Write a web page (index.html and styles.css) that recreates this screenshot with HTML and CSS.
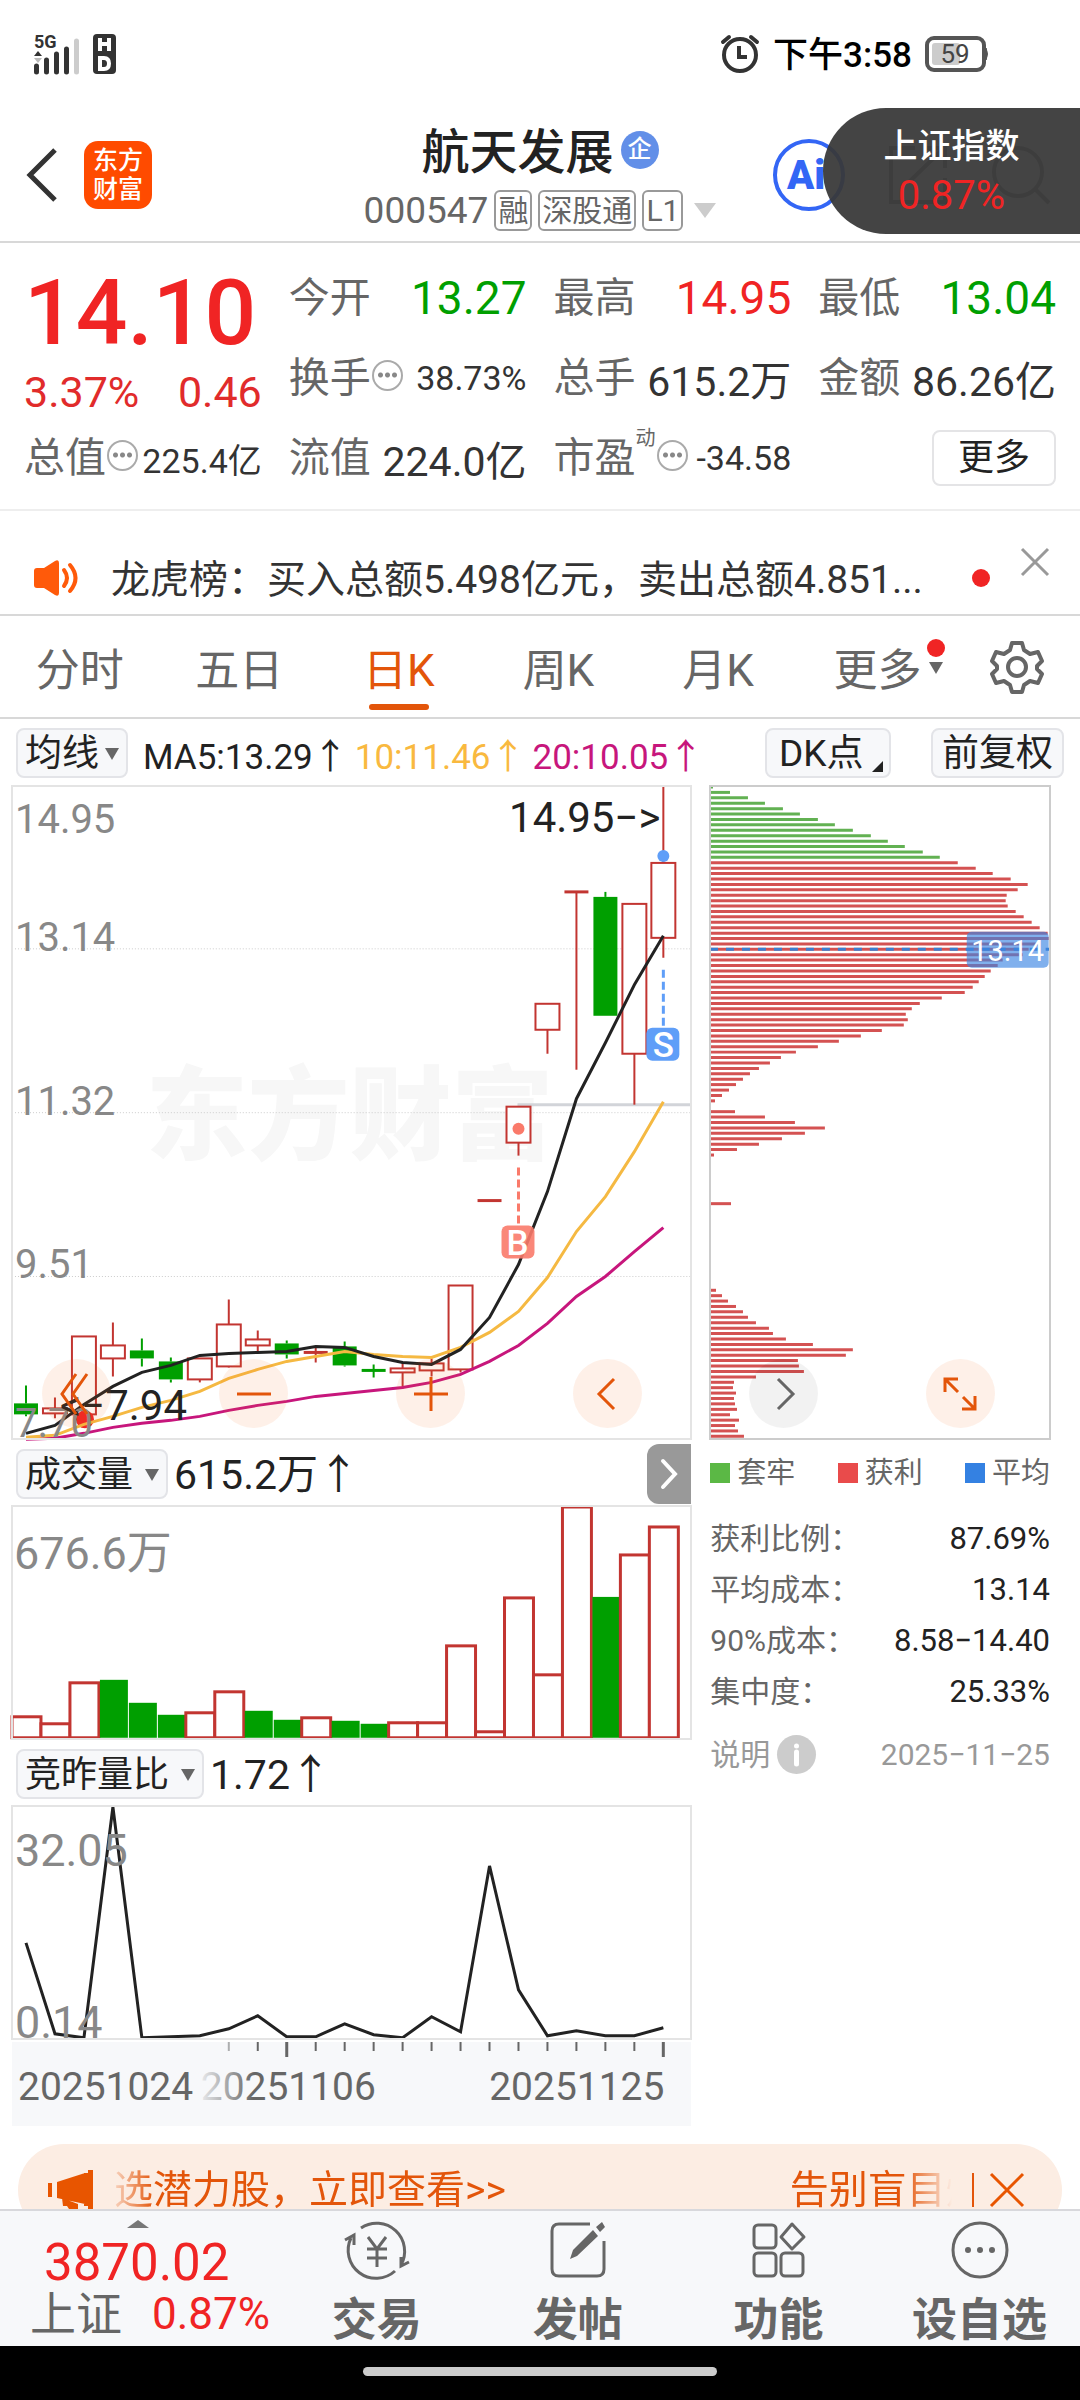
FILE: index.html
```html
<!DOCTYPE html>
<html lang="zh-CN">

<head>
    <meta charset="UTF-8">
    <meta name="viewport" content="width=device-width, initial-scale=1.0">
    <title>航天发展 000547</title>
    <link rel="stylesheet" href="styles.css">
</head>

<body>
    <div class="status-bar">
        <div class="status-side">
            <svg width="46" height="40" viewBox="0 0 46 40">
                <text x="0" y="14" class="net-text">5G</text>
                <path d="M4 17l4 5H0z" fill="#333" />
                <path d="M4 29l4-5H0z" fill="#bbb" />
                <path d="M2.500 32v6M12.500 26v12M22.500 20v18M32.500 15v23" stroke="#333" stroke-width="5" stroke-linecap="round" />
                <path d="M42.500 7v31" stroke="#ccc" stroke-width="5" stroke-linecap="round" />
            </svg>
            <svg width="23" height="40" viewBox="0 0 23 40">
                <rect width="23" height="40" rx="4" fill="#333" />
                <path d="M7 4v13M16 4v13M7 10h9M7 24v11h4q5 0 5-5.500t-5-5.500z" fill="none" stroke="#fff" stroke-width="4" />
            </svg>
        </div>
        <div class="status-side">
            <svg width="40" height="40" viewBox="0 0 40 40" fill="none" stroke="#333" stroke-width="4">
                <circle cx="20" cy="21" r="16" />
                <path d="M3 8l6-5M37 8l-6-5" stroke-linecap="round" />
                <path d="M19 12v11h8" />
            </svg>
            <span class="clock">下午3:58</span>
            <svg width="64" height="36" viewBox="0 0 64 36">
                <rect x="2" y="2" width="57" height="32" rx="7" fill="#fff" stroke="#555" stroke-width="4" />
                <rect x="7" y="7" width="28" height="22" rx="3" fill="#ccc" />
                <path d="M61 12q3 6 0 12z" fill="#555" stroke="#555" />
                <text x="30" y="27" text-anchor="middle" class="battery-text">59</text>
            </svg>
        </div>
    </div>

    <header class="header">
        <div class="header-left">
            <button class="icon-btn" aria-label="返回">
                <svg width="34" height="56" viewBox="0 0 34 56"><path d="M31 3L6 28l25 25" fill="none" stroke="#333" stroke-width="5" /></svg>
            </button>
            <div class="logo"><span>东方</span><span>财富</span></div>
        </div>
        <div class="stock">
            <div class="stock-name"><h1>航天发展</h1><span class="corp">企</span></div>
            <div class="stock-code">
                <span>000547</span>
                <span class="tag">融</span>
                <span class="tag">深股通</span>
                <span class="tag">L1</span>
                <svg class="code-arrow" width="22" height="15" viewBox="0 0 22 15"><path d="M0 0h22L11 15z" fill="#ccc" /></svg>
            </div>
        </div>
        <div class="header-right">
            <button class="icon-btn" aria-label="AI">
                <svg width="74" height="74" viewBox="0 0 74 74">
                    <circle cx="37" cy="37" r="34" fill="#fff" stroke="#3366f5" stroke-width="4" />
                    <text x="15" y="51" class="ai-text">Ai</text>
                </svg>
            </button>
            <button class="icon-btn" aria-label="分享">
                <svg width="62" height="62" viewBox="0 0 62 62" fill="none" stroke="#888" stroke-width="4"><path d="M28 4H4v54h54V34M22 38L56 5M38 4h20v20" /></svg>
            </button>
            <button class="icon-btn" aria-label="搜索">
                <svg width="62" height="62" viewBox="0 0 62 62" fill="none" stroke="#888" stroke-width="4"><circle cx="28" cy="28" r="24" /><path d="M45 45l14 14" /></svg>
            </button>
        </div>
        <div class="float-index">
            <span>上证指数</span>
            <strong>0.87%</strong>
        </div>
    </header>

    <main class="content">
        <section class="quote">
            <div class="price">
                <div class="price-now">14.10</div>
                <div class="price-change"><span>3.37%</span><span>0.46</span></div>
            </div>
            <div class="cell"><span class="label">今开</span><span class="num green">13.27</span></div>
            <div class="cell"><span class="label">最高</span><span class="num red">14.95</span></div>
            <div class="cell"><span class="label">最低</span><span class="num green">13.04</span></div>
            <div class="cell"><span class="label">换手<i class="dots"></i></span><span class="val small">38.73%</span></div>
            <div class="cell"><span class="label">总手</span><span class="val">615.2万</span></div>
            <div class="cell"><span class="label">金额</span><span class="val">86.26亿</span></div>
            <div class="cell"><span class="label">总值<i class="dots"></i></span><span class="val small">225.4亿</span></div>
            <div class="cell"><span class="label">流值</span><span class="val">224.0亿</span></div>
            <div class="cell"><span class="label">市盈<sup>动</sup><i class="dots"></i></span><span class="val small">-34.58</span></div>
            <div class="cell cell-end"><button class="more-btn">更多</button></div>
        </section>

        <section class="notice">
            <svg width="46" height="36" viewBox="0 0 46 36">
                <path d="M0 11q0-3 3-3h7L21 1q4-2 4 2v30q0 4-4 2L10 28H3q-3 0-3-3z" fill="#ff5a0a" />
                <path d="M30 10q6 8 0 16M36 5q11 13 0 26" fill="none" stroke="#ff5a0a" stroke-width="4" stroke-linecap="round" />
            </svg>
            <p>龙虎榜：买入总额5.498亿元，卖出总额4.851...</p>
            <span class="red-dot"></span>
            <button class="icon-btn notice-close" aria-label="关闭">
                <svg width="28" height="28" viewBox="0 0 28 28"><path d="M1 1l26 26M27 1L1 27" stroke="#999" stroke-width="3" /></svg>
            </button>
        </section>

        <nav class="tabs">
            <button class="tab">分时</button>
            <button class="tab">五日</button>
            <button class="tab active">日K</button>
            <button class="tab">周K</button>
            <button class="tab">月K</button>
            <button class="tab">更多<span class="tab-mark"><i class="red-dot"></i><i class="caret"></i></span></button>
            <button class="tab-set" aria-label="设置">
                <svg width="54" height="54" viewBox="0 0 54 54" fill="none" stroke="#666" stroke-width="4" stroke-linejoin="round">
                    <path d="M22 3h10l2 7 6 4 8-2 4 9-5 5v3l5 5-4 9-8-2-6 4-2 7H22l-2-7-6-4-8 2-4-9 5-5v-3l-5-5 4-9 8 2 6-4z" />
                    <circle cx="27" cy="27" r="9" />
                </svg>
            </button>
        </nav>

        <div class="indicator">
            <button class="chip">均线<i class="caret"></i></button>
            <span class="ma ma5">MA5:13.29↑</span>
            <span class="ma ma10">10:11.46↑</span>
            <span class="ma ma20">20:10.05↑</span>
            <button class="chip chip-dk">DK点<i class="corner"></i></button>
            <button class="chip chip-wide">前复权</button>
        </div>

        <div class="charts">
            <div class="col-left">
                <div class="chart">
                    <svg id="kline" viewBox="0 0 680 654"></svg>
                    <div class="tools">
                        <button class="round" aria-label="最早"><svg width="34" height="42" viewBox="0 0 34 42"><path d="M16 1L2 21l14 20M27 1L13 21l14 20" /></svg></button>
                        <button class="round" aria-label="缩小"><svg width="34" height="34" viewBox="0 0 34 34"><path d="M0 17h34" /></svg></button>
                        <button class="round" aria-label="放大"><svg width="34" height="34" viewBox="0 0 34 34"><path d="M0 17h34M17 0v34" /></svg></button>
                        <button class="round" aria-label="向左"><svg width="34" height="34" viewBox="0 0 34 34"><path d="M23 2L8 17l15 15" /></svg></button>
                    </div>
                </div>
                <div class="sub-head">
                    <button class="chip">成交量<i class="caret"></i></button>
                    <span class="sub-val">615.2万↑</span>
                    <button class="fold" aria-label="收起">
                        <svg width="16" height="30" viewBox="0 0 16 30"><path d="M2 2l12 13L2 28" fill="none" stroke="#fff" stroke-width="4" stroke-linecap="round" /></svg>
                    </button>
                </div>
                <svg id="volume" class="chart" viewBox="0 0 680 233"></svg>
                <div class="sub-head">
                    <button class="chip">竞昨量比<i class="caret"></i></button>
                    <span class="sub-val">1.72↑</span>
                </div>
                <svg id="ratio" class="chart" viewBox="0 0 680 233"></svg>
                <svg id="dates" class="dates" viewBox="0 0 680 84"></svg>
            </div>

            <div class="col-right">
                <div class="chart chart-chip">
                    <svg id="chips" viewBox="0 0 340 654"></svg>
                    <div class="tools tools-right">
                        <button class="round gray" aria-label="向右"><svg width="34" height="34" viewBox="0 0 34 34"><path d="M11 2l15 15-15 15" /></svg></button>
                        <button class="round" aria-label="全屏"><svg width="34" height="34" viewBox="0 0 34 34"><path d="M2 15V2h13M2 2l13 13M32 19v13H19M32 32L20 20" /></svg></button>
                    </div>
                </div>
                <div class="legend">
                    <span><i class="sq sq-green"></i>套牢</span>
                    <span><i class="sq sq-red"></i>获利</span>
                    <span><i class="sq sq-blue"></i>平均</span>
                </div>
                <dl class="facts">
                    <div><dt>获利比例：</dt><dd>87.69%</dd></div>
                    <div><dt>平均成本：</dt><dd>13.14</dd></div>
                    <div><dt>90%成本：</dt><dd>8.58−14.40</dd></div>
                    <div><dt>集中度：</dt><dd>25.33%</dd></div>
                </dl>
                <div class="explain">
                    <span>说明</span>
                    <svg width="39" height="39" viewBox="0 0 39 39"><circle cx="19.500" cy="19.500" r="19.500" fill="#ccc" /><circle cx="19.500" cy="11" r="2.500" fill="#fff" /><path d="M19.500 17v12" stroke="#fff" stroke-width="5" stroke-linecap="round" /></svg>
                    <time>2025−11−25</time>
                </div>
            </div>
        </div>

        <div class="promo">
            <svg width="46" height="40" viewBox="0 0 46 40" fill="#e85500"><path d="M0 13h4v14H0zM9 12L37 3v31L9 28zM40 0h5v40h-5zM36 3h6v33h-6zM14 28l16 6v5h-9l-2-3h-4z" /></svg>
            <div class="promo-text"><span>选潜力股，立即查看&gt;&gt;</span><span>告别盲目炒</span></div>
            <button class="icon-btn promo-close" aria-label="关闭">
                <svg width="34" height="34" viewBox="0 0 34 34"><path d="M1 1l32 32M33 1L1 33" stroke="#e85500" stroke-width="3" /></svg>
            </button>
        </div>
    </main>

    <footer class="bottom">
        <div class="index">
            <svg class="index-up" width="22" height="8" viewBox="0 0 22 8"><path d="M11 0l11 8H0z" fill="#777" /></svg>
            <div class="index-value">3870.02</div>
            <div class="index-row"><span>上证</span><strong>0.87%</strong></div>
        </div>
        <button class="nav-item">
            <svg width="66" height="60" viewBox="0 0 66 60" fill="none" stroke="#666" stroke-width="3">
                <path d="M17 8a28 28 0 0 1 40 37M7 18a28 28 0 0 0 44 33M1 20l9-5v10M57 37v9l8-4M24 17l9 12 9-12M33 29v18M23 29h20M23 38h20" />
            </svg>
            交易
        </button>
        <button class="nav-item">
            <svg width="66" height="60" viewBox="0 0 66 60" fill="none" stroke="#666" stroke-width="3">
                <path d="M45 4H14q-7 0-7 7v38q0 7 7 7h38q7 0 7-7V21" />
                <path d="M25 39l3-9 20-20 5 6-21 20zM51 7l6-5 3 5-5 5z" fill="#666" stroke="none" />
            </svg>
            发帖
        </button>
        <button class="nav-item">
            <svg width="66" height="60" viewBox="0 0 66 60" fill="none" stroke="#666" stroke-width="3" stroke-linejoin="round">
                <rect x="8" y="5" width="22" height="23" rx="4" /><rect x="8" y="33" width="22" height="23" rx="4" />
                <rect x="35" y="33" width="22" height="23" rx="4" /><path d="M46 4l12 13-12 12-11-12z" />
            </svg>
            功能
        </button>
        <button class="nav-item">
            <svg width="66" height="60" viewBox="0 0 66 60">
                <circle cx="33" cy="30" r="27" fill="none" stroke="#666" stroke-width="3" />
                <circle cx="21" cy="30" r="3" fill="#666" /><circle cx="33" cy="30" r="3" fill="#666" /><circle cx="45" cy="30" r="3" fill="#666" />
            </svg>
            设自选
        </button>
    </footer>
    <div class="home-bar"><span></span></div>

    <script src="script.js"></script>
</body>

</html>
```

FILE: styles.css
```css
* {
    box-sizing: border-box;
}

body {
    display: flex;
    flex-direction: column;
    height: 100vh;
    margin: 0;
    font-family: Roboto, "Noto Sans CJK SC", sans-serif;
    color: #222;
    background-color: #fff;
}

button {
    margin: 0;
    padding: 0;
    border: none;
    background: none;
    font: inherit;
    color: inherit;
    cursor: pointer;
}

h1, p, dl, dd {
    margin: 0;
}

svg {
    flex-shrink: 0;
    display: block;
    overflow: visible;
}

.icon-btn {
    display: flex;
}

.red {
    color: #f02424;
}

.green {
    color: #009f00;
}

/* 状态栏 */
.status-bar {
    display: flex;
    justify-content: space-between;
    align-items: center;
    height: 108px;
    padding: 0 91px 0 34px;
}

.status-side {
    display: flex;
    align-items: center;
    gap: 13px;
}

.clock {
    font-size: 35px;
    line-height: 40px;
    padding-top: 3px;
    font-weight: 500;
    color: #000;
}

.net-text {
    font-size: 18px;
    font-weight: bold;
    fill: #333;
}

.battery-text {
    font-size: 26px;
    fill: #444;
}

/* 顶部标题 */
.header {
    position: relative;
    flex-shrink: 0;
    display: grid;
    grid-template-columns: 1fr auto 1fr;
    align-items: center;
    height: 135px;
    border-bottom: 2px solid #d8d8d8;
}

.header-left {
    display: flex;
    align-items: center;
    gap: 26px;
    padding-left: 24px;
}

.logo {
    display: flex;
    flex-direction: column;
    justify-content: center;
    align-items: center;
    width: 68px;
    height: 68px;
    border-radius: 14px;
    background-color: #ff4b00;
    color: #fff;
    font-size: 25px;
    line-height: 29px;
    font-weight: 500;
}

.stock {
    padding-top: 12px;
}

.stock-name {
    display: flex;
    justify-content: center;
    align-items: center;
    gap: 7px;
}

.stock-name h1 {
    font-size: 48px;
    line-height: 60px;
    font-weight: 500;
}

.corp {
    width: 38px;
    height: 38px;
    margin-bottom: 6px;
    border-radius: 50%;
    background-color: #628fe8;
    color: #fff;
    font-size: 24px;
    line-height: 36px;
    font-weight: 500;
    text-align: center;
}

.stock-code {
    display: flex;
    justify-content: center;
    align-items: center;
    gap: 6px;
    font-size: 37px;
    line-height: 56px;
    color: #666;
}

.tag {
    height: 41px;
    padding: 0 2px;
    border: 2px solid #999;
    border-radius: 6px;
    font-size: 30px;
    line-height: 38px;
}

.code-arrow {
    margin-left: 5px;
}

.header-right {
    display: flex;
    justify-content: flex-end;
    align-items: center;
    gap: 41px;
    padding-right: 28px;
}

.ai-text {
    font-size: 40px;
    font-weight: 900;
    fill: #3366f5;
}

.float-index {
    position: absolute;
    top: 0;
    right: 0;
    display: flex;
    flex-direction: column;
    justify-content: center;
    align-items: center;
    width: 257px;
    height: 126px;
    border-radius: 63px 0 0 63px;
    background-color: rgba(56, 56, 56, 0.94);
    color: #fff;
    font-size: 34px;
    line-height: 50px;
    font-weight: 500;
}

.float-index strong {
    font-size: 40px;
    font-weight: 400;
    color: #f02424;
}

/* 行情 */
.content {
    flex: 1;
    min-height: 0;
    overflow: hidden;
}

.quote {
    display: grid;
    grid-template-columns: repeat(4, 1fr);
    grid-auto-rows: 80px;
    column-gap: 27px;
    height: 268px;
    padding: 15px 24px 0;
    border-bottom: 2px solid #eee;
}

.price {
    grid-row: span 2;
    color: #f02424;
}

.price-now {
    font-size: 91px;
    line-height: 106px;
    font-weight: 500;
    padding-top: 2px;
}

.price-change {
    display: flex;
    justify-content: space-between;
    font-size: 43px;
    line-height: 52px;
    color: #e12b2b;
}

.cell {
    display: flex;
    justify-content: space-between;
    align-items: center;
    white-space: nowrap;
}

.cell-end {
    justify-content: flex-end;
}

.label {
    display: flex;
    align-items: center;
    font-size: 41px;
    line-height: 60px;
    color: #666;
}

.label sup {
    align-self: flex-start;
    font-size: 20px;
    line-height: 20px;
}

.num {
    font-size: 46px;
}

.val {
    font-size: 41px;
    color: #333;
}

.small {
    font-size: 34px;
}

.dots {
    width: 31px;
    height: 31px;
    margin: 0 0 6px 1px;
    border: 2px solid #aaa;
    border-radius: 50%;
    background: radial-gradient(circle, #888 2px, transparent 3px) center / 7px 26px repeat-x;
    background-clip: content-box;
    padding: 0 3px;
}

.more-btn {
    width: 124px;
    height: 56px;
    border: 2px solid #e4e4e6;
    border-radius: 8px;
    font-size: 36px;
    line-height: 50px;
    color: #222;
}

/* 公告 */
.notice {
    display: flex;
    align-items: center;
    height: 105px;
    padding: 30px 31px 0 34px;
    border-bottom: 2px solid #d8d8d8;
}

.notice p {
    flex: 1;
    padding: 4px 0 0 31px;
    font-size: 39px;
    line-height: 56px;
    white-space: nowrap;
    color: #333;
}

.red-dot {
    width: 18px;
    height: 18px;
    border-radius: 50%;
    background-color: #f02424;
}

.notice-close {
    align-self: flex-start;
    margin: 7px 0 0 31px;
}

/* 周期切换 */
.tabs {
    display: grid;
    grid-template-columns: repeat(6, 4fr) 3fr;
    height: 103px;
    padding-right: 3px;
    border-bottom: 2px solid #d8d8d8;
    font-size: 44px;
    color: #666;
}

.tab {
    position: relative;
}

.active {
    color: #e3550a;
}

.active::after {
    content: "";
    position: absolute;
    left: 50%;
    bottom: 7px;
    width: 60px;
    height: 6px;
    margin-left: -30px;
    border-radius: 3px;
    background-color: #e3550a;
}

.tab-mark {
    position: absolute;
    top: 23px;
    right: 12px;
    display: flex;
    flex-direction: column;
    align-items: center;
    gap: 5px;
}

.tab-set {
    display: flex;
    justify-content: center;
    align-items: center;
}

.caret {
    display: inline-block;
    border: 7px solid transparent;
    border-top: 12px solid #666;
    border-bottom: none;
}

/* 指标 */
.indicator {
    display: flex;
    align-items: center;
    height: 67px;
    padding: 0 16px;
}

.chip {
    display: flex;
    justify-content: space-between;
    align-items: center;
    height: 50px;
    padding: 2px 7px 0;
    border: 2px solid #e3e4e8;
    border-radius: 8px;
    background-color: #f7f8fa;
    font-size: 37px;
    line-height: 46px;
    white-space: nowrap;
}

.chip .caret {
    margin-left: 6px;
}

.chip-dk {
    position: relative;
    width: 126px;
    margin-left: auto;
    padding-left: 12px;
}

.corner {
    position: absolute;
    right: 6px;
    bottom: 4px;
    border-left: 11px solid transparent;
    border-bottom: 11px solid #222;
}

.chip-wide {
    margin-left: 40px;
    padding: 2px 9px 0;
}

.ma {
    margin-left: 7px;
    padding-top: 2px;
    font-size: 35px;
    white-space: nowrap;
}

.ma5 {
    margin-left: 15px;
}

.ma10 {
    color: #f9b93f;
}

.ma20 {
    color: #c7167c;
}

/* 图表 */
.charts {
    display: grid;
    grid-template-columns: 2fr 1fr;
    gap: 19px;
    padding: 0 30px 0 12px;
}

.chart {
    position: relative;
    width: 100%;
    outline: 2px solid #e4e4e4;
    outline-offset: -1px;
}

.chart svg {
    width: 100%;
}

.chart .round svg {
    width: 34px;
}

.chart-chip {
    outline-color: #ccc;
}

.tools {
    position: absolute;
    left: 30px;
    right: 49px;
    bottom: 11px;
    display: flex;
    justify-content: space-between;
}

.tools-right {
    left: 39px;
    right: 55px;
}

.round {
    display: flex;
    justify-content: center;
    align-items: center;
    width: 69px;
    height: 69px;
    border-radius: 50%;
    background-color: rgba(250, 110, 30, 0.1);
}

.round path {
    fill: none;
    stroke: #e3550a;
    stroke-width: 3;
}

.gray {
    background-color: rgba(0, 0, 0, 0.05);
}

.gray path {
    stroke: #666;
}

.sub-head {
    display: flex;
    align-items: center;
    height: 67px;
    padding: 2px 0 0 4px;
}

.sub-head .chip {
    font-size: 36px;
}

.sub-head .caret {
    margin-left: 12px;
}

.sub-val {
    padding: 2px 0 0 6px;
    font-size: 41px;
    line-height: 60px;
}

.fold {
    display: flex;
    justify-content: center;
    align-items: center;
    width: 44px;
    height: 60px;
    margin-left: auto;
    border-radius: 12px 0 0 12px;
    background-color: #999;
}

.dates {
    width: 100%;
    margin-top: 3px;
    background-color: #f7f8fa;
}

.axis {
    font-size: 40px;
    fill: #888;
}

.axis-big {
    font-size: 45px;
    fill: #888;
}

.axis-date {
    font-size: 39px;
    fill: #666;
}

.peak {
    font-size: 42px;
    fill: #222;
}

.watermark {
    font-size: 102px;
    font-weight: 900;
    fill: #f7f7f7;
}

.mark {
    font-size: 35px;
    font-weight: 500;
    fill: #fff;
}

.avg {
    font-size: 29px;
    fill: #fff;
}

/* 筹码 */
.legend {
    display: flex;
    justify-content: space-between;
    height: 66px;
    padding-top: 1px;
    font-size: 29px;
    line-height: 66px;
    color: #666;
}

.sq {
    display: inline-block;
    width: 20px;
    height: 20px;
    margin-right: 7px;
}

.sq-green {
    background-color: #5bb845;
}

.sq-red {
    background-color: #e94b4b;
}

.sq-blue {
    background-color: #3481e2;
}

.facts {
    padding-top: 8px;
    font-size: 30px;
    line-height: 51px;
}

.facts div {
    display: flex;
    justify-content: space-between;
}

.facts dt {
    color: #666;
}

.facts dd {
    font-size: 31px;
}

.explain {
    display: flex;
    align-items: center;
    gap: 7px;
    padding-top: 12px;
    font-size: 30px;
    line-height: 51px;
    color: #999;
}

.explain time {
    margin-left: auto;
}

/* 推广条 */
.promo {
    display: flex;
    align-items: center;
    height: 92px;
    margin: 18px;
    padding: 0 38px 0 30px;
    border-radius: 50px;
    background-color: #fcede3;
    color: #e3550a;
}

.promo-text {
    flex: 1;
    min-width: 0;
    display: flex;
    gap: 284px;
    padding-left: 20px;
    font-size: 39px;
    line-height: 58px;
    white-space: nowrap;
    overflow: hidden;
    -webkit-mask-image: linear-gradient(to right, transparent 12px, #000 60px, #000 calc(100% - 60px), transparent calc(100% - 12px));
    mask-image: linear-gradient(to right, transparent 12px, #000 60px, #000 calc(100% - 60px), transparent calc(100% - 12px));
}

.promo-close {
    margin-left: 8px;
    padding-left: 16px;
    border-left: 2px solid #e3550a;
}

/* 底部导航 */
.bottom {
    flex-shrink: 0;
    display: grid;
    grid-template-columns: 11fr repeat(4, 8fr);
    height: 137px;
    border-top: 2px solid #d8d8dc;
    background-color: #f7f8fa;
    color: #666;
}

.index {
    padding: 9px 0 0 30px;
}

.index-up {
    margin-left: 97px;
}

.index-value {
    padding: 6px 0 0 14px;
    font-size: 51px;
    line-height: 58px;
    color: #f02424;
}

.index-row {
    display: flex;
    align-items: center;
    gap: 30px;
    font-size: 46px;
    line-height: 44px;
}

.index-row strong {
    font-size: 44px;
    font-weight: 400;
    color: #f02424;
}

.nav-item {
    display: flex;
    flex-direction: column;
    align-items: center;
    padding-top: 9px;
    font-size: 45px;
    line-height: 82px;
    font-weight: 700;
}

.home-bar {
    flex-shrink: 0;
    display: flex;
    justify-content: center;
    align-items: center;
    height: 54px;
    background-color: #000;
}

.home-bar span {
    width: 354px;
    height: 9px;
    margin-bottom: 3px;
    border-radius: 5px;
    background-color: #ccc;
}
```

FILE: script.js
```js
var RED = '#c23531';
var GREEN = '#009f00';
var STEP = 29;

function cx(i) {
    return 14 + i * STEP;
}

function polyline(points, color) {
    var list = points.map(function (y, i) { return cx(i) + ',' + y; }).join(' ');
    return '<polyline points="' + list + '" fill="none" stroke="' + color + '" stroke-width="3" />';
}

// [body top, body bottom, high, low, green]
var candles = [
    [618, 629, 600, 631, 1], [623, 628, 612, 633], [551, 629, 551, 629],
    [560, 573, 537, 591], [565, 573, 553, 581, 1], [576, 594, 572, 597, 1],
    [573, 594, 573, 597], [539, 581, 514, 582], [554, 560, 545, 566],
    [558, 569, 555, 573, 1], [567, 567, 561, 577], [561, 580, 556, 581, 1],
    [585, 585, 579, 592, 1], [583, 587, 577, 603], [578, 585, 573, 591],
    [500, 584, 500, 587], [415, 415, 415, 415], [321, 357, 321, 370],
    [218, 244, 218, 268], [106, 106, 106, 284], [111, 230, 106, 230, 1],
    [118, 268, 118, 319], [77, 152, 0, 172]
];
var ma5 = [648, 640, 619, 601, 587, 580, 570, 568, 567, 566, 561, 562, 571, 577, 579, 564, 532, 479, 406, 313, 257, 199, 150];
var ma10 = [652, 650, 639, 631, 622, 615, 606, 593, 584, 576, 571, 566, 569, 571, 572, 562, 547, 526, 492, 446, 411, 366, 316];
var ma20 = [654, 653, 648, 642, 638, 635, 631, 625, 620, 616, 611, 608, 605, 602, 597, 589, 576, 560, 538, 511, 491, 466, 442];

function drawKline() {
    var html = '<text x="134" y="366" class="watermark">东方财富</text>';
    [163, 327, 491].forEach(function (y) {
        html += '<path d="M0 ' + y + 'h680" stroke="#ccc" stroke-dasharray="1 2" />';
    });
    html += '<path d="M506 319h174" stroke="#d2d4d9" stroke-width="3" />';
    candles.forEach(function (c, i) {
        var x = cx(i);
        var color = c[4] ? GREEN : RED;
        html += '<path d="M' + x + ' ' + c[2] + 'V' + c[0] + 'M' + x + ' ' + c[1] + 'V' + c[3] + '" stroke="' + color + '" stroke-width="2" />';
        if (c[0] === c[1]) {
            html += '<path d="M' + (x - 12) + ' ' + c[0] + 'h24" stroke="' + color + '" stroke-width="3" />';
        } else {
            html += '<rect x="' + (x - 12) + '" y="' + c[0] + '" width="24" height="' + (c[1] - c[0]) + '" fill="' + (c[4] ? GREEN : '#fff') + '" stroke="' + color + '" stroke-width="' + (c[4] ? 0 : 2) + '" />';
        }
    });
    html += '<circle cx="73" cy="634" r="9" fill="#f02424" />';
    html += polyline(ma20, '#c7167c') + polyline(ma10, '#f5b942') + polyline(ma5, '#222');

    // buy and sell marks
    html += '<circle cx="507" cy="343" r="6" fill="#fa7a6a" /><path d="M507 382v56" stroke="#fa7a6a" stroke-width="3" stroke-dasharray="8 4" />';
    html += '<rect x="490" y="440" width="33" height="33" rx="6" fill="#fa7a6a" opacity="0.9" /><text x="506" y="469" text-anchor="middle" class="mark">B</text>';
    html += '<circle cx="652" cy="70" r="6" fill="#5f9ef8" /><path d="M652 184v56" stroke="#5f9ef8" stroke-width="3" stroke-dasharray="8 4" />';
    html += '<rect x="635" y="242" width="33" height="33" rx="6" fill="#5f9ef8" /><text x="652" y="271" text-anchor="middle" class="mark">S</text>';

    [['14.95', 47], ['13.14', 165], ['11.32', 329], ['9.51', 492], ['7.70', 652]].forEach(function (t) {
        html += '<text x="3" y="' + t[1] + '" class="axis">' + t[0] + '</text>';
    });
    html += '<text x="649" y="46" text-anchor="end" class="peak">14.95−&gt;</text>';
    html += '<text x="48" y="635" class="peak">&lt;−7.94</text>';
    document.getElementById('kline').innerHTML = html;
}

function drawVolume() {
    var tops = [211, 218, 177, 174, 197, 209, 207, 186, 205, 214, 212, 215, 218, 217, 217, 140, 226, 92, 169, 1, 91, 49, 21];
    var down = [3, 4, 5, 8, 9, 11, 12, 20];
    var html = '<text x="2" y="63" class="axis-big">676.6万</text>';
    tops.forEach(function (y, i) {
        var isDown = down.indexOf(i) > -1;
        html += '<rect x="' + (i * STEP + (isDown ? 1 : 0)) + '" y="' + y + '" width="' + (isDown ? 28 : 29) + '" height="' + (232 - y) + '" fill="' + (isDown ? GREEN : '#fff') + '" stroke="' + RED + '" stroke-width="' + (isDown ? 0 : 3) + '" />';
    });
    document.getElementById('volume').innerHTML = html;
}

function drawRatio() {
    var points = [137, 228, 232, 1, 232, 231, 230, 223, 210, 231, 231, 218, 229, 232, 211, 226, 60, 184, 230, 225, 230, 230, 222];
    document.getElementById('ratio').innerHTML = polyline(points, '#222') +
        '<text x="3" y="60" class="axis-big">32.05</text><text x="3" y="232" class="axis-big">0.14</text>';
}

function drawDates() {
    var html = '<defs><linearGradient id="fade"><stop offset="0" stop-color="#666" stop-opacity="0.1" /><stop offset="0.3" stop-color="#666" /></linearGradient></defs>';
    for (var i = 7; i < 23; i++) {
        var major = i === 9 || i === 22;
        html += '<path d="M' + cx(i) + ' 0v' + (major ? 15 : 9) + '" stroke="#666" stroke-width="' + (major ? 3 : 2) + '" opacity="' + (i === 7 ? 0.5 : 1) + '" />';
    }
    html += '<text x="6" y="58" class="axis-date">20251024</text>';
    html += '<text x="189" y="58" class="axis-date" style="fill: url(#fade)">20251106</text>';
    html += '<text x="653" y="58" text-anchor="end" class="axis-date">20251125</text>';
    document.getElementById('dates').innerHTML = html;
}

function drawChips() {
    var bars = [
        3, 20, 38, 55, 73, 90, 108, 125, 143, 161, 178, 195, 213, 230,
        248, 266, 283, 301, 318, 308, 297, 296, 298, 306, 314, 322, 330, 338, 339,
        330, 319, 313, 293, 288, 281, 275, 269, 263, 255, 232, 210, 202, 196, 198,
        194, 172, 151, 129, 108, 86, 71, 60, 49, 40, 33, 26, 19, 12, 5, 0,
        25, 55, 85, 115, 95, 72, 49, 27, 4, 0, 0, 0, 0, 0, 0, 0, 0, 21,
        0, 0, 0, 0, 0, 0, 0, 0, 0, 0, 0, 0, 1, 1, 1,
        6, 12, 18, 26, 33, 38, 46, 59, 63, 76, 103, 143, 136, 88, 89, 94, 46,
        24, 23, 26, 24, 25, 27, 20, 29, 25, 28, 34
    ];
    var html = '';
    bars.forEach(function (w, i) {
        var y = (1 + i * 5.417).toFixed(1);
        html += '<path d="M0 ' + y + 'h' + w + '" stroke="' + (i < 14 ? '#62b152' : '#d45252') + '" stroke-width="3" />';
    });
    html += '<path d="M0 163.500h340" stroke="#3a80d2" stroke-width="3" stroke-dasharray="8 8" />';
    html += '<rect x="257" y="146" width="82" height="36" rx="5" fill="#3c86e3" opacity="0.65" />';
    html += '<text x="298" y="175" text-anchor="middle" class="avg">13.14</text>';
    document.getElementById('chips').innerHTML = html;
}

drawKline();
drawVolume();
drawRatio();
drawDates();
drawChips();
```
